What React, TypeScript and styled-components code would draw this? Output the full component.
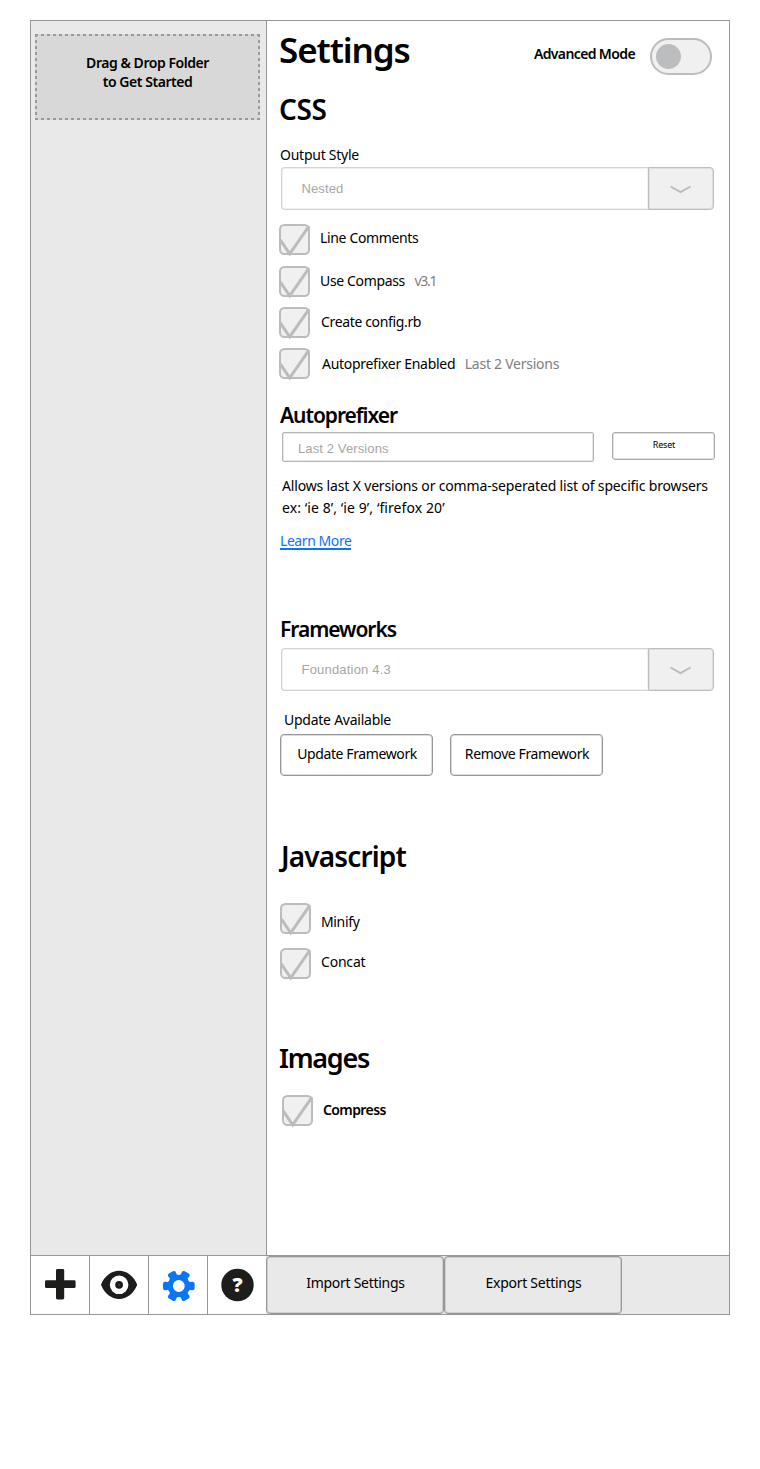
import React from "react";
import styled, { createGlobalStyle, css } from "styled-components";

const LINE = "#979797";
const MUTED = "#bcbcbe";
const INK = "#1d1d1b";
const BLUE = "#0b75f7";

const GlobalStyle = createGlobalStyle`
  *, *::before, *::after { box-sizing: border-box; }
  body {
    margin: 0;
    background: #fff;
    color: #000;
    font: 400 14px/20px "Noto Sans", "Open Sans", sans-serif;
  }
  h1, h2, h3, p { margin: 0; }
  button, input { font: inherit; color: inherit; }
`;

const outline = (color: string) => css`
  border: 1px solid ${color};
  box-shadow: inset 0 0 0 1px ${color}55;
`;

const Window = styled.div`
  width: 700px;
  height: 1295px;
  margin: 20px 30px 0;
  border: 1px solid ${LINE};
  display: flex;
  flex-direction: column;
`;

const Body = styled.div`
  height: 1234px;
  display: flex;
`;

const Sidebar = styled.aside`
  width: 236px;
  flex: none;
  padding: 13px 0 0 4px;
  background: #e9e9e9;
  border-right: 1px solid ${LINE};
`;

const DropZone = styled.div`
  width: 225px;
  height: 86px;
  padding-top: 19px;
  text-align: center;
  font-weight: 600;
  line-height: 19px;
  letter-spacing: -0.45px;
  background:
    repeating-linear-gradient(90deg, #9a9a9a 0 3px, transparent 3px 6px) 0 0 / 100% 2px no-repeat,
    repeating-linear-gradient(90deg, #9a9a9a 0 3px, transparent 3px 6px) 0 100% / 100% 2px no-repeat,
    repeating-linear-gradient(#9a9a9a 0 3px, transparent 3px 6px) 0 0 / 2px 100% no-repeat,
    repeating-linear-gradient(#9a9a9a 0 3px, transparent 3px 6px) 100% 0 / 2px 100% no-repeat,
    #d8d8d8;
`;

const Content = styled.main`
  flex: 1;
  min-width: 0;
  display: flex;
  flex-direction: column;
  align-items: flex-start;
`;

const Header = styled.header`
  width: 100%;
  height: 60px;
  padding: 0 17px 0 12px;
  display: flex;
  align-items: flex-start;
`;

const Title = styled.h1`
  margin-top: 5px;
  font-size: 35px;
  font-weight: 600;
  line-height: 48px;
  letter-spacing: -1.1px;
`;

const ModeLabel = styled.span`
  margin: 23px 15px 0 auto;
  font-weight: 600;
  letter-spacing: -0.62px;
`;

const Toggle = styled.button`
  width: 62px;
  height: 37px;
  margin-top: 17px;
  padding: 0 4px;
  display: flex;
  align-items: center;
  background: #f0f0f0;
  border: 2px solid ${MUTED};
  border-radius: 19px;

  &::before {
    content: "";
    width: 25px;
    height: 25px;
    border-radius: 50%;
    background: #bbbdbf;
  }
`;

const SectionTitle = styled.h2<{ $top: number; $size?: number; $track?: number; $left?: number }>`
  margin: ${(p) => p.$top}px 0 0 ${(p) => p.$left ?? 12}px;
  font-size: ${(p) => p.$size ?? 28}px;
  font-weight: 600;
  line-height: 38px;
  letter-spacing: ${(p) => p.$track ?? -0.4}px;
`;

const SubTitle = styled.h3<{ $top: number }>`
  margin: ${(p) => p.$top}px 0 0 13px;
  font-size: 21px;
  font-weight: 600;
  line-height: 28px;
  letter-spacing: -1.05px;
`;

const FieldLabel = styled.span<{ $top: number; $left: number }>`
  margin: ${(p) => p.$top}px 0 0 ${(p) => p.$left}px;
  letter-spacing: -0.25px;
`;

const SelectBox = styled.div<{ $top: number }>`
  width: 433px;
  height: 43px;
  margin: ${(p) => p.$top}px 0 0 13.5px;
  display: flex;
`;

const SelectValue = styled.span<{ $track: number }>`
  ${outline("#d3d3d3")}
  flex: 1;
  padding-left: 20px;
  border-right: 0;
  border-radius: 4px 0 0 4px;
  color: #a6a6a6;
  font: 13px/41px "Liberation Sans", Arial, sans-serif;
  letter-spacing: ${(p) => p.$track}px;
`;

const SelectArrow = styled.span`
  ${outline("#bdbdbd")}
  width: 66px;
  display: flex;
  align-items: center;
  justify-content: center;
  background: #f0f0f0;
  border-radius: 0 4px 4px 0;
`;

const CheckRow = styled.label<{ $top: number; $left?: number }>`
  height: 31px;
  margin: ${(p) => p.$top}px 0 0 ${(p) => p.$left ?? 12}px;
  display: flex;
  align-items: flex-start;
`;

const CheckBox = styled.span`
  width: 31px;
  height: 31px;
  display: flex;

  svg { overflow: visible; }
`;

const CheckText = styled.span<{ $top: number; $left: number; $track: number; $bold?: boolean; $muted?: boolean }>`
  margin: ${(p) => p.$top}px 0 0 ${(p) => p.$left}px;
  font-weight: ${(p) => (p.$bold ? 600 : 400)};
  letter-spacing: ${(p) => p.$track}px;
  color: ${(p) => (p.$muted ? "#808080" : "#000")};
`;

const PrefixRow = styled.div`
  margin: 3px 0 0 15px;
  display: flex;
  align-items: flex-start;
  gap: 18px;
`;

const PrefixInput = styled.input`
  ${outline("#b4b4b4")}
  width: 312px;
  height: 30px;
  padding: 2px 15px 0;
  border-radius: 2px;
  background: #fff;
  outline: 0;
  font: 13px/16px "Liberation Sans", Arial, sans-serif;
  letter-spacing: 0.12px;

  &::placeholder { color: #a6a6a6; opacity: 1; }
`;

const Button = styled.button<{ $small?: boolean }>`
  ${outline(LINE)}
  width: 153px;
  height: 42px;
  padding: 0 0 2px 1px;
  background: #fff;
  border-radius: 4px;
  letter-spacing: -0.39px;
  ${(p) =>
    p.$small &&
    css`
      ${outline("#aaaaaa")}
      width: 103px;
      height: 28px;
      padding-bottom: 2px;
      border-radius: 3px;
      font-size: 9px;
      line-height: 12px;
      letter-spacing: -0.2px;
    `}
`;

const Hint = styled.p`
  margin: 13px 0 0 15px;
  line-height: 22px;
  letter-spacing: -0.16px;
  white-space: nowrap;
`;

const Example = styled.span`
  letter-spacing: 0.08px;
`;

const Link = styled.a`
  margin: 13px 0 0 13px;
  padding-top: 1px;
  height: 18px;
  line-height: 16px;
  letter-spacing: -0.43px;
  color: ${BLUE};
  border-bottom: 2px solid ${BLUE};
`;

const ButtonRow = styled.div`
  margin: 4px 0 0 13px;
  display: flex;
  gap: 17px;
`;

const Footer = styled.footer`
  height: 59px;
  display: flex;
  border-top: 1px solid ${LINE};
  background: #e9e9e9;
`;

const Tool = styled.button`
  width: 59px;
  height: 58px;
  padding: 0;
  display: flex;
  background: #fff;
  border: 0;
  border-right: 1px solid ${LINE};

  &:nth-child(4) {
    width: 58px;
    border-right: 0;
  }
`;

const FooterButton = styled.button`
  ${outline(LINE)}
  width: 178px;
  height: 58px;
  padding: 0 0 4px 1px;
  background: #e9e9e9;
  border-radius: 4px;
  letter-spacing: -0.28px;
`;

function Select({ value, top, track = 0 }: { value: string; top: number; track?: number }) {
  return (
    <SelectBox $top={top}>
      <SelectValue $track={track}>{value}</SelectValue>
      <SelectArrow>
        <svg width="22" height="10" viewBox="0 0 22 10" fill="none" stroke={MUTED} strokeWidth="2">
          <path d="M0.5 2.5 10.5 8.2 20.5 2.5" strokeLinejoin="round" />
        </svg>
      </SelectArrow>
    </SelectBox>
  );
}

interface CheckProps {
  label: string;
  note?: string;
  noteTrack?: number;
  top: number;
  left?: number;
  textTop: number;
  textLeft: number;
  track?: number;
  bold?: boolean;
}

function Check({ label, note, noteTrack = -0.25, top, left, textTop, textLeft, track = -0.35, bold }: CheckProps) {
  return (
    <CheckRow $top={top} $left={left}>
      <CheckBox>
        <svg width="31" height="31" viewBox="0 0 31 31" fill="none" stroke={MUTED}>
          <rect x="1" y="1" width="29" height="29" rx="4.5" fill="#f0f0f0" strokeWidth="2" />
          <path d="M1.2 15.8 10.7 29.8 30 2.2" strokeWidth="3" />
        </svg>
      </CheckBox>
      <CheckText $top={textTop} $left={textLeft} $track={track} $bold={bold}>
        {label}
      </CheckText>
      {note && (
        <CheckText $top={textTop} $left={9.5} $track={noteTrack} $muted>
          {note}
        </CheckText>
      )}
    </CheckRow>
  );
}

const polar = (r: number, deg: number) => {
  const a = (deg * Math.PI) / 180;
  return `${(29.8 + r * Math.cos(a)).toFixed(2)} ${(30 + r * Math.sin(a)).toFixed(2)}`;
};

const gearPath =
  [0, 60, 120, 180, 240, 300]
    .map(
      (a, i) =>
        `${i ? "Q" + polar(10.6, a - 30) + " " : "M"}${polar(11.6, a - 20)} L${polar(14.8, a - 17)} ` +
        `Q${polar(16.2, a - 14)} ${polar(16, a - 8)} L${polar(16, a + 8)} ` +
        `Q${polar(16.2, a + 14)} ${polar(14.8, a + 17)} L${polar(11.6, a + 20)}`
    )
    .join(" ") +
  ` Q${polar(10.6, 330)} ${polar(11.6, 340)} Z M23.9 30a5.9 5.9 0 1 0 11.8 0a5.9 5.9 0 1 0 -11.8 0Z`;

export default function App() {
  return (
    <>
      <GlobalStyle />
      <Window>
        <Body>
          <Sidebar>
            <DropZone>
              Drag &amp; Drop Folder
              <br />
              to Get Started
            </DropZone>
          </Sidebar>
          <Content>
            <Header>
              <Title>Settings</Title>
              <ModeLabel>Advanced Mode</ModeLabel>
              <Toggle aria-label="Advanced Mode" />
            </Header>

            <SectionTitle $top={9}>CSS</SectionTitle>
            <FieldLabel $top={17} $left={13}>Output Style</FieldLabel>
            <Select value="Nested" top={2} track={0.1} />
            <Check label="Line Comments" top={14} textTop={4} textLeft={10} />
            <Check label="Use Compass" note="v3.1" noteTrack={-1.3} top={11} textTop={5} textLeft={10} />
            <Check label="Create config.rb" top={10} textTop={5} textLeft={11} />
            <Check label="Autoprefixer Enabled" note="Last 2 Versions" top={10} textTop={6} textLeft={12} track={-0.29} />

            <SubTitle $top={22}>Autoprefixer</SubTitle>
            <PrefixRow>
              <PrefixInput placeholder="Last 2 Versions" />
              <Button $small>Reset</Button>
            </PrefixRow>
            <Hint>
              Allows last X versions or comma-seperated list of specific browsers
              <br />
              <Example>ex: ‘ie 8’, ‘ie 9’, ‘firefox 20’</Example>
            </Hint>
            <Link>Learn More</Link>

            <SubTitle $top={65}>Frameworks</SubTitle>
            <Select value="Foundation 4.3" top={5} track={0.2} />
            <FieldLabel $top={19} $left={17}>Update Available</FieldLabel>
            <ButtonRow>
              <Button>Update Framework</Button>
              <Button>Remove Framework</Button>
            </ButtonRow>

            <SectionTitle $top={61} $track={-0.85} $left={14}>Javascript</SectionTitle>
            <Check label="Minify" top={28} left={13} textTop={9} textLeft={10} />
            <Check label="Concat" top={14} left={13} textTop={4} textLeft={10} track={-0.2} />

            <SectionTitle $top={60} $size={27} $track={-1.3}>Images</SectionTitle>
            <Check label="Compress" top={18} left={15} textTop={5} textLeft={10} track={-0.6} bold />
          </Content>
        </Body>
        <Footer>
          <Tool aria-label="Add">
            <svg width="58" height="58" viewBox="0 0 58 58" fill={INK}>
              <rect x="25" y="13" width="8.2" height="30.4" rx="1.4" />
              <rect x="14" y="24.3" width="30.6" height="7.8" rx="1.4" />
            </svg>
          </Tool>
          <Tool aria-label="Preview">
            <svg width="58" height="58" viewBox="0 0 58 58" fill={INK}>
              <path
                fillRule="evenodd"
                d="M11 28.8C14.5 20 21.5 14.8 29.1 14.8S43.7 20 47.2 28.8C43.7 37.8 36.7 43 29.1 43S14.5 37.8 11 28.8ZM19.8 28.8a9.3 9.3 0 1 0 18.6 0a9.3 9.3 0 1 0 -18.6 0Z"
              />
              <circle cx="29.1" cy="28.8" r="3.9" />
              <circle cx="29.1" cy="28.8" r="0.6" fill="#777" />
            </svg>
          </Tool>
          <Tool aria-label="Settings">
            <svg width="58" height="58" viewBox="0 0 58 58" fill={BLUE}>
              <path fillRule="evenodd" d={gearPath} />
            </svg>
          </Tool>
          <Tool aria-label="Help">
            <svg width="58" height="58" viewBox="0 0 58 58">
              <circle cx="29.5" cy="29" r="16.2" fill={INK} />
              <text
                x="29.6"
                y="36.4"
                textAnchor="middle"
                fill="#fff"
                fontFamily="Noto Sans, sans-serif"
                fontSize="20"
                fontWeight="900"
              >
                ?
              </text>
            </svg>
          </Tool>
          <FooterButton>Import Settings</FooterButton>
          <FooterButton>Export Settings</FooterButton>
        </Footer>
      </Window>
    </>
  );
}
